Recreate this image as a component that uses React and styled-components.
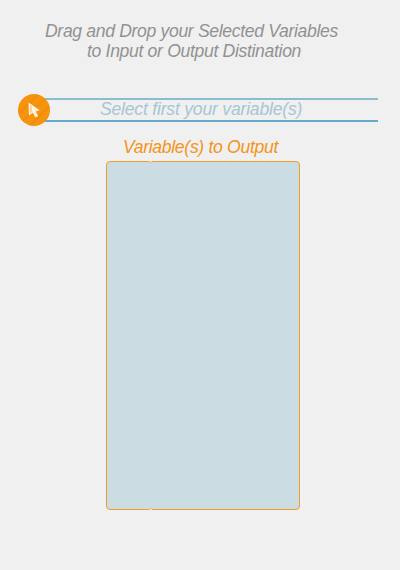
import React from 'react';
import styled, { createGlobalStyle } from 'styled-components';

const Global = createGlobalStyle`
  * { box-sizing: border-box; }
  body { margin: 0; background: #f0f0f0; font-family: "Liberation Sans", Arial, sans-serif; }
`;

const Page = styled.main`
  width: 400px;
  height: 570px;
  padding-top: 21px;
  overflow: hidden;
  background: #f0f0f0;
  font-size: 17.6px;
  font-style: italic;
  line-height: 20px;
`;

const Heading = styled.h1`
  margin: 0 0 33px 45px;
  font: inherit;
  color: #929292;
`;

const Line = styled.span`
  display: block;
  width: max-content;
  margin-left: ${({ $indent = 0 }) => $indent}px;
  letter-spacing: ${({ $tracking }) => $tracking}px;
  white-space: nowrap;
`;

const Step = styled.section`
  display: flex;
  align-items: center;
  height: 32px;
  margin: 0 22px 0 18px;
`;

const Badge = styled.div`
  z-index: 1;
  flex: none;
  display: grid;
  width: 32px;
  height: 32px;
  overflow: hidden;
  border-radius: 50%;
  background: repeating-linear-gradient(135deg, #f7940b 0 5px, #f08f0d 5px 8px);
`;

const Prompt = styled.div`
  flex: 1;
  height: 24px;
  margin-left: -10px;
  padding-left: 60px;
  border-top: 2px solid #8bbdd1;
  border-bottom: 2px solid #65abc8;
  color: #a6c6d4;
  line-height: 19px;
`;

const Output = styled.section`
  width: 194px;
  margin: 11px 0 0 106px;
`;

const OutputTitle = styled.h2`
  margin: 0 0 4px 17px;
  font: inherit;
  color: #f4941a;
`;

const DropZone = styled.div`
  position: relative;
  height: 349px;
  border: 1px solid #f09d2e;
  border-radius: 4px;
  background: #cbdde3;
`;

const Notch = styled.i`
  position: absolute;
  left: 42px;
  ${({ $edge }) => $edge}: -1px;
  width: 3px;
  height: 2px;
  background: radial-gradient(circle at 50% ${({ $edge }) => ($edge === 'top' ? '75%' : '25%')}, #f39a28 0 0.6px, #e7d7bd 1px);
`;

export default function App() {
  return (
    <Page>
      <Global />
      <Heading>
        <Line $tracking={-0.34}>Drag and Drop your Selected Variables</Line>
        <Line $indent={42} $tracking={-0.33}>to Input or Output Distination</Line>
      </Heading>
      <Step>
        <Badge>
          <svg width="32" height="32" viewBox="0 0 32 32">
            <path d="M10.6 8.5L21.7 16.2L17.8 17.4L20.3 22.1L17.3 23.6L14.9 18.8L10.9 21.6Z" fill="#fff1dc" />
            <path d="M12.9 11.8V18.6" stroke="#f5a53d" strokeWidth="0.9" />
          </svg>
        </Badge>
        <Prompt><Line $tracking={-0.21}>Select first your variable(s)</Line></Prompt>
      </Step>
      <Output>
        <OutputTitle><Line $tracking={-0.32}>Variable(s) to Output</Line></OutputTitle>
        <DropZone>
          <Notch $edge="top" />
          <Notch $edge="bottom" />
        </DropZone>
      </Output>
    </Page>
  );
}
